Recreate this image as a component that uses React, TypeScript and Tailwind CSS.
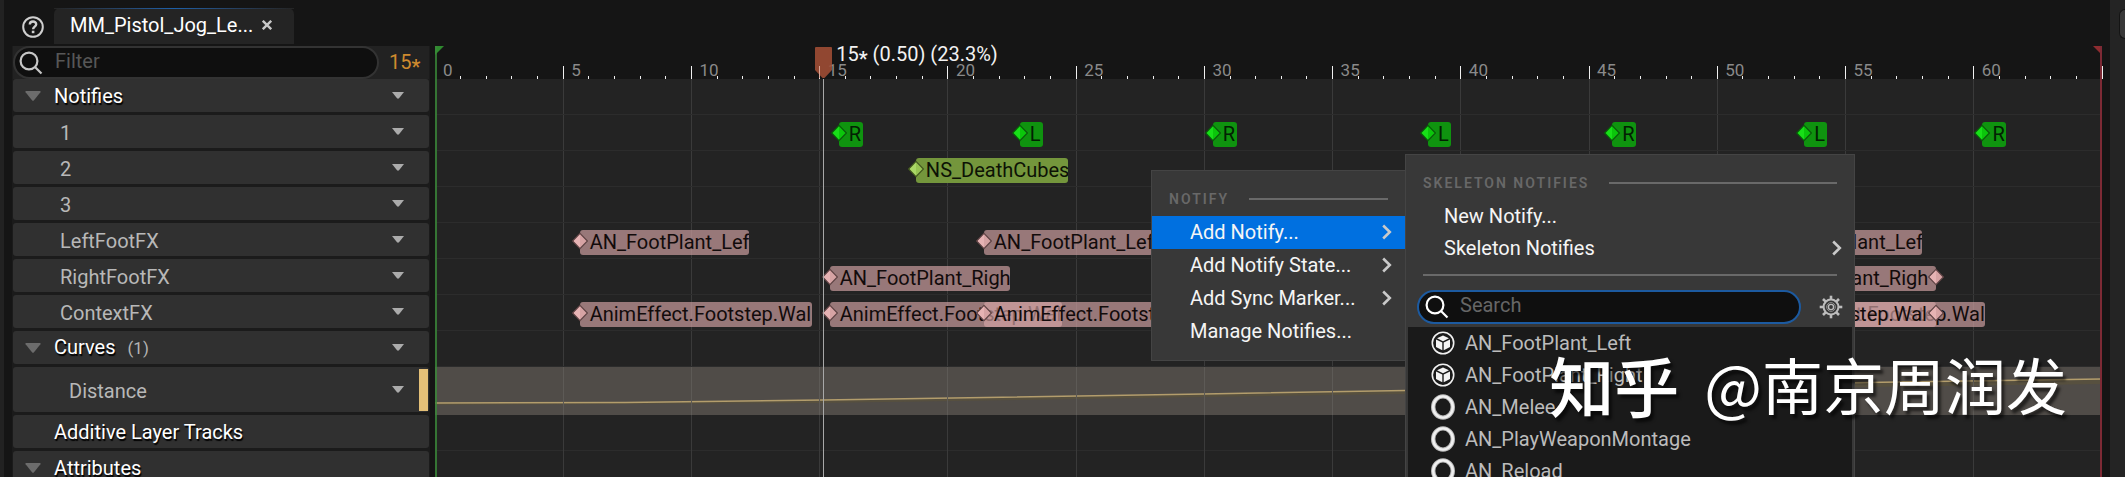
import React from 'react';

const LAST_FRAME = 65;
const FRAMES = Array.from({ length: LAST_FRAME + 1 }, (_, i) => i);
const MAJOR_FRAMES = FRAMES.filter((f) => f % 5 === 0 && f < LAST_FRAME);

const toPercent = (frame: number) => `${(frame / LAST_FRAME) * 100}%`;

type Tone = 'green' | 'lime' | 'pink';

interface Notify {
    frame: number;
    label: string;
    tone: Tone;
    width: string;
    flipped?: boolean;
}

interface OutlinerRow {
    label: string;
    kind: 'group' | 'track' | 'curve';
    count?: number;
    expander?: boolean;
    menu?: boolean;
}

const FOOT_LEFT = { label: 'AN_FootPlant_Lef', tone: 'pink' as Tone, width: 'w-[169px]' };
const FOOT_RIGHT = { label: 'AN_FootPlant_Righ', tone: 'pink' as Tone, width: 'w-[180px]' };
const FOOTSTEP = { label: 'AnimEffect.Footstep.Wal', tone: 'pink' as Tone, width: 'w-[232px]' };
const SYNC_R = { label: 'R', tone: 'green' as Tone, width: 'w-[24px]' };
const SYNC_L = { label: 'L', tone: 'green' as Tone, width: 'w-[23px]' };

const TRACKS: Notify[][] = [
    [],
    [
        { ...SYNC_R, frame: 15.74 },
        { ...SYNC_L, frame: 22.8 },
        { ...SYNC_R, frame: 30.33 },
        { ...SYNC_L, frame: 38.72 },
        { ...SYNC_R, frame: 45.9 },
        { ...SYNC_L, frame: 53.39 },
        { ...SYNC_R, frame: 60.34 },
    ],
    [{ frame: 18.75, label: 'NS_DeathCubes', tone: 'lime', width: 'w-[152px]' }],
    [],
    [
        { ...FOOT_LEFT, frame: 5.64 },
        { ...FOOT_LEFT, frame: 21.4 },
        { ...FOOT_LEFT, frame: 51.4 },
    ],
    [
        { ...FOOT_RIGHT, frame: 15.39 },
        { ...FOOT_RIGHT, frame: 58.54, flipped: true },
    ],
    [
        { ...FOOTSTEP, frame: 5.64 },
        { ...FOOTSTEP, frame: 15.39 },
        { ...FOOTSTEP, frame: 21.4 },
        { ...FOOTSTEP, frame: 51.4 },
        { ...FOOTSTEP, frame: 58.54, flipped: true },
    ],
    [],
];

const ROWS: OutlinerRow[] = [
    { label: 'Notifies', kind: 'group', expander: true, menu: true },
    { label: '1', kind: 'track', menu: true },
    { label: '2', kind: 'track', menu: true },
    { label: '3', kind: 'track', menu: true },
    { label: 'LeftFootFX', kind: 'track', menu: true },
    { label: 'RightFootFX', kind: 'track', menu: true },
    { label: 'ContextFX', kind: 'track', menu: true },
    { label: 'Curves', kind: 'group', count: 1, expander: true, menu: true },
    { label: 'Distance', kind: 'curve', menu: true },
    { label: 'Additive Layer Tracks', kind: 'group' },
    { label: 'Attributes', kind: 'group', expander: true },
];

const BOX_TONES: Record<Tone, string> = {
    green: 'bg-[#0f930f] text-[#032003]',
    lime: 'bg-[#74963c] text-[#0d1205]',
    pink: 'bg-[#d4a4a5]/66 text-[#120b0b]',
};

const DIAMOND_TONES: Record<Tone, [string, string, string]> = {
    green: ['#18df18', '#0bc60b', '#0a5a0a'],
    lime: ['#aad766', '#97c452', '#42561f'],
    pink: ['#e6b3b4', '#d6a3a4', '#5e4344'],
};

const SearchIcon: React.FC<{ className: string }> = ({ className }) => (
    <svg className={className} width="24" height="24" viewBox="0 0 24 24" fill="none" stroke="currentColor" strokeWidth="2.2">
        <circle cx="10" cy="10" r="8.4" />
        <path d="M16 16l6.5 6.5" />
    </svg>
);

const ChevronIcon: React.FC = () => (
    <svg className="shrink-0 text-[#c9c9c9]" width="10" height="16" viewBox="0 0 10 16" fill="none" stroke="currentColor" strokeWidth="2.6">
        <path d="M1.2 1.5L7.8 8l-6.6 6.5" />
    </svg>
);

const BlueprintIcon: React.FC = () => (
    <svg className="shrink-0" width="24" height="24" viewBox="0 0 24 24">
        <circle cx="12" cy="12" r="10.7" fill="none" stroke="#f0f0f0" strokeWidth="1.6" />
        <path d="M12 4.6l6 2.7-6 2.9-6-2.9z" fill="#f4f4f4" />
        <path d="M5 8.6l6.3 3v7.6L5 16z" fill="#f4f4f4" />
        <path d="M19 8.6l-6.3 3v7.6L19 16z" fill="#f4f4f4" />
    </svg>
);

const ClassIcon: React.FC = () => (
    <svg className="shrink-0" width="24" height="26" viewBox="0 0 24 26">
        <ellipse cx="12" cy="13" rx="9.8" ry="10.6" fill="none" stroke="#bdbdbd" strokeWidth="4.4" />
        <ellipse cx="12" cy="13" rx="9.8" ry="10.6" fill="none" stroke="#f0f0f0" strokeWidth="2.4" />
    </svg>
);

const GearIcon: React.FC = () => (
    <svg width="24" height="24" viewBox="-12 -12 24 24" fill="none" stroke="#bdbdbd">
        <circle r="7.4" strokeWidth="2" />
        <circle r="4.4" strokeWidth="1" stroke="#8c8c8c" />
        <circle r="2.6" strokeWidth="1.4" />
        {[0, 45, 90, 135, 180, 225, 270, 315].map((a) => (
            <path key={a} d="M0 -7.5V-11.3" strokeWidth="2.6" transform={`rotate(${a})`} />
        ))}
    </svg>
);

// frame number with the low "between frames" star
const FrameNumber: React.FC<{ frame: number }> = ({ frame }) => (
    <>
        {frame}
        <span className="align-sub leading-none font-medium">*</span>
    </>
);

const TabBar: React.FC = () => (
    <header className="flex h-[46px] items-end gap-[10px] pl-[10px]">
        <button type="button" aria-label="Help" className="mb-2 text-[#cfcfcf]">
            <svg width="22" height="22" viewBox="0 0 22 22" fill="none" stroke="currentColor">
                <circle cx="11" cy="11" r="9.8" strokeWidth="2" />
                <path d="M7.8 8.6c0-4 6.4-4 6.4-.3 0 2.400-3.100 2.400-3.100 5" strokeWidth="2.400" />
                <path d="M11.100 14.700v2.500" strokeWidth="2.600" />
            </svg>
        </button>
        <div className="mb-[2px] flex h-[36px] w-[240px] flex-col rounded-t-md bg-[#242424]">
            <div className="h-px bg-linear-to-r from-[#242424] via-[#1c5fa8] to-[#242424]" />
            <div className="flex flex-1 items-center gap-3 pb-[3px] pl-4">
                <span className="w-[180px] text-white">MM_Pistol_Jog_Le...</span>
                <button type="button" aria-label="Close tab" className="text-[#c8c8c8]">
                    <svg width="10" height="10" viewBox="0 0 10 10" stroke="currentColor" strokeWidth="2.4">
                        <path d="M.8 .8l8.400 8.400M9.200 .8L.8 9.200" />
                    </svg>
                </button>
            </div>
        </div>
    </header>
);

const Row: React.FC<{ row: OutlinerRow }> = ({ row }) => {
    const isGroup = row.kind === 'group';
    const isCurve = row.kind === 'curve';
    return (
        <li className={`flex shrink-0 items-center rounded-[3px] bg-[#303030] ${isCurve ? 'h-[45px]' : 'h-[33px]'}`}>
            <div className="flex w-[41px] shrink-0 pl-3">
                {row.expander && (
                    <button type="button" aria-label={`Collapse ${row.label}`}>
                        <svg width="16" height="10" viewBox="0 0 16 10" fill="#6c6c6c">
                            <path d="M1 0h14q1 .3 .4 1.200L9 9.200q-1 1-2 0L.6 1.200Q0 .3 1 0z" />
                        </svg>
                    </button>
                )}
            </div>
            {isGroup ? (
                <span className="flex flex-1 items-baseline gap-3 text-white [text-shadow:1px_2px_1px_#000]">
                    {row.label}
                    {row.count !== undefined && (
                        <span className="text-[17px] text-[#b4b4b4] [text-shadow:none]">({row.count})</span>
                    )}
                </span>
            ) : (
                <span className={`flex-1 pt-[2px] text-[#b8b8b8] ${isCurve ? 'pl-[15px]' : 'pl-[6px]'}`}>{row.label}</span>
            )}
            {row.menu && (
                <button type="button" aria-label={`${row.label} options`} className={isCurve ? 'mr-[15px]' : 'mr-[25px]'}>
                    <svg width="12" height="7" viewBox="0 0 12 7" fill="#ababab">
                        <path d="M0 0h12L7 6.300q-1 .9-2 0z" />
                    </svg>
                </button>
            )}
            {isCurve && <span className="mr-px h-[42px] w-[9px] bg-[#e4c078]" />}
        </li>
    );
};

const Outliner: React.FC = () => (
    <aside className="flex w-[418px] shrink-0 flex-col bg-[#1b1b1b] pr-px pl-px">
        <div className="flex h-[34px] items-center bg-[#222222]">
            <label className="flex h-[33px] w-[366px] items-center gap-[12px] rounded-full border-2 border-[#333333] bg-[#0f0f0f] pl-1">
                <SearchIcon className="shrink-0 text-[#c6c6c6]" />
                <input type="text" aria-label="Filter" placeholder="Filter" className="h-[26px] min-w-0 flex-1 self-start bg-transparent outline-none placeholder:text-[#575757]" />
            </label>
            <span className="pl-[10px] text-[#cf8a2e]">
                <FrameNumber frame={15} />
            </span>
        </div>
        <ul className="flex flex-col gap-[3px]">
            {ROWS.map((row) => (
                <Row key={row.label} row={row} />
            ))}
        </ul>
    </aside>
);

const NotifyMarker: React.FC<{ notify: Notify }> = ({ notify }) => {
    const [light, mid, edge] = DIAMOND_TONES[notify.tone];
    return (
        <div className="absolute top-[7px] h-[25px]" style={{ left: toPercent(notify.frame) }}>
            <div
                className={`h-[25px] overflow-hidden rounded-[3px] leading-6 whitespace-nowrap ${notify.width} ${BOX_TONES[notify.tone]} ${
                    notify.flipped ? '-translate-x-full pl-px' : 'pl-[10px]'
                }`}
            >
                {notify.label}
            </div>
            <svg className="absolute -top-px -left-2" width="16" height="24" viewBox="-8 -12 16 24">
                <path d="M0 -7.600L7.400 0 0 7.600 -7.400 0z" fill={mid} stroke={edge} strokeWidth="1.200" />
                <path d="M0 -6.400L0 6.400 -6.200 0z" fill={light} />
            </svg>
        </div>
    );
};

const Ruler: React.FC = () => (
    <div className="relative h-[33px]">
        {MAJOR_FRAMES.map((f) => (
            <span key={f} className="absolute top-[13px] pl-2 text-[17px] leading-[22px] text-[#8a8a8a]" style={{ left: toPercent(f) }}>
                {f}
            </span>
        ))}
        <svg className="absolute inset-0 h-full w-full overflow-visible">
            <path d="M0 0h9L0 9z" fill="#2f8a2f" />
            {FRAMES.slice(1).map((f) => (
                <line key={f} x1={toPercent(f)} x2={toPercent(f)} y1={f % 5 === 0 ? 20 : 30} y2="33" stroke="#f0f0f0" shapeRendering="crispEdges" />
            ))}
        </svg>
        <svg className="absolute top-0 right-0" width="9" height="9">
            <path d="M0 0h9v9z" fill="#8e2c30" />
        </svg>
    </div>
);

const CurveTrack: React.FC = () => (
    <div className="relative h-[48px] bg-[#504c48]">
        <svg className="block h-full w-full" viewBox="0 0 1666 48" preserveAspectRatio="none">
            <path d="M0 36.500L190 36 388 33.500 768 27.500 1430 15.500 1666 12V17L1430 20 768 30 388 36 0 38z" fill="#57503f" />
            <path d="M0 36L190 35.500 388 33 768 27 1430 15.500 1666 12" fill="none" stroke="#b39d6c" strokeWidth="1.500" />
        </svg>
    </div>
);

const Timeline: React.FC = () => (
    <main className="relative ml-[5px] flex min-w-0 flex-1 flex-col">
        <Ruler />
        <div className="relative flex-1 bg-[#232323]">
            <svg className="absolute inset-0 h-full w-full">
                {MAJOR_FRAMES.slice(1).map((f) => (
                    <line key={f} x1={toPercent(f)} x2={toPercent(f)} y1="0" y2="100%" stroke="#3a3a3a" shapeRendering="crispEdges" />
                ))}
            </svg>
            {TRACKS.map((track, i) => (
                <div key={i} className="relative h-[36px] border-b border-[#2c2c2c]">
                    {track.map((notify, j) => (
                        <NotifyMarker key={j} notify={notify} />
                    ))}
                </div>
            ))}
            <CurveTrack />
            <div className="h-[36px] border-b border-[#2c2c2c]" />
            <svg className="pointer-events-none absolute inset-0 h-full w-full">
                {MAJOR_FRAMES.slice(1).map((f) => (
                    <line key={f} x1={toPercent(f)} x2={toPercent(f)} y1="288" y2="336" stroke="#5d5a56" shapeRendering="crispEdges" />
                ))}
            </svg>
        </div>
        <div className="absolute inset-y-0 left-0 w-[2px] bg-[#3a8a38]/80" />
        <div className="absolute inset-y-0 right-0 w-[2px] bg-[#7d2a35]" />
        {/* playhead */}
        <div className="absolute inset-y-0" style={{ left: toPercent(15.14) }}>
            <div className="mt-[33px] h-full w-px bg-[#a8a8a8]" />
            <svg className="absolute top-px -left-2" width="17" height="31" viewBox="0 0 17 31">
                <path d="M1 0h15q1 0 1 1v22l-7 7.500q-1.500 1-3 0L0 23V1q0-1 1-1z" fill="#a34e36" fillOpacity=".88" />
                <path d="M4.500 19v12" stroke="#d9a596" />
            </svg>
            <span className="absolute -top-1 left-[13px] leading-6 whitespace-nowrap text-[#f2f2f2]">
                <FrameNumber frame={15} /> (0.50) (23.3%)
            </span>
        </div>
    </main>
);

const MenuHeading: React.FC<{ children: React.ReactNode }> = ({ children }) => (
    <div className="flex items-center gap-[20px] px-[17px]">
        <h2 className="text-[14px] leading-5 font-semibold tracking-[2px] text-[#686868] uppercase">{children}</h2>
        <span className="h-[2px] flex-1 bg-[#696969]" />
    </div>
);

const NotifyMenu: React.FC = () => (
    <div role="menu" className="absolute top-[170px] left-[1151px] w-[255px] border border-[#444444] bg-[#383838] pt-[18px] pb-3">
        <MenuHeading>Notify</MenuHeading>
        <div className="flex flex-col pt-[7px]">
            {['Add Notify...', 'Add Notify State...', 'Add Sync Marker...', 'Manage Notifies...'].map((item, i) => (
                <button
                    key={item}
                    type="button"
                    role="menuitem"
                    className={`flex h-[33px] items-center justify-between pr-[13px] pb-[2px] pl-[38px] text-left text-[#f5f5f5] ${i === 0 ? 'bg-[#0070e0]' : ''}`}
                >
                    {item}
                    {i < 3 && <ChevronIcon />}
                </button>
            ))}
        </div>
    </div>
);

const CLASSES = [
    { name: 'AN_FootPlant_Left', blueprint: true },
    { name: 'AN_FootPlant_Right', blueprint: true },
    { name: 'AN_Melee', blueprint: false },
    { name: 'AN_PlayWeaponMontage', blueprint: false },
    { name: 'AN_Reload', blueprint: false },
];

const AddNotifyMenu: React.FC = () => (
    <div role="menu" className="absolute top-[154px] left-[1405px] w-[450px] border border-[#444444] bg-[#383838] pt-[18px]">
        <MenuHeading>Skeleton Notifies</MenuHeading>
        <div className="flex flex-col pt-[7px]">
            <button type="button" role="menuitem" className="flex h-[32px] items-center pl-[38px] text-[#f5f5f5]">
                New Notify...
            </button>
            <button type="button" role="menuitem" className="flex h-[32px] items-center justify-between pr-[12px] pl-[38px] text-[#f5f5f5]">
                Skeleton Notifies
                <ChevronIcon />
            </button>
        </div>
        <hr className="mx-[17px] mt-[10px] border-t-2 border-[#696969]" />
        <div className="mt-[14px] flex items-center gap-[18px] pr-[11px] pl-[11px]">
            <label className="flex h-[34px] flex-1 items-center gap-[11px] rounded-full border-2 border-[#1c5aa0] bg-[#0f0f0f] pl-[6px]">
                <SearchIcon className="shrink-0 text-white" />
                <input type="text" aria-label="Search classes" placeholder="Search" className="h-[26px] min-w-0 flex-1 self-start bg-transparent outline-none placeholder:text-[#666666]" />
            </label>
            <button type="button" aria-label="View settings">
                <GearIcon />
            </button>
        </div>
        <ul className="mx-[2px] mt-[3px] bg-[#1a1a1a]">
            {CLASSES.map((cls) => (
                <li key={cls.name} className="flex h-[32px] items-center gap-[10px] pl-[23px] text-[#bcbcbc]">
                    {cls.blueprint ? <BlueprintIcon /> : <ClassIcon />}
                    {cls.name}
                </li>
            ))}
        </ul>
    </div>
);

const Watermark: React.FC = () => (
    <div className="pointer-events-none absolute right-[58px] bottom-[49px] flex items-center gap-[25px] font-['Noto_Sans_CJK_SC',sans-serif] leading-[88px] whitespace-nowrap text-white [text-shadow:3px_4px_3px_rgba(0,0,0,0.6)]">
        <span className="text-[65px] font-medium">知乎</span>
        <span className="text-[61px]">@南京周润发</span>
    </div>
);

const App: React.FC = () => {
    return (
        <div className="relative flex h-screen overflow-hidden bg-[#151515] font-[Roboto,sans-serif] text-[20px] leading-[26px]">
            <div className="w-1 shrink-0 bg-[#222222]" />
            <div className="flex min-w-0 flex-1 flex-col pr-2 pl-2">
                <TabBar />
                <div className="flex min-h-0 flex-1">
                    <Outliner />
                    <Timeline />
                </div>
            </div>
            <div className="flex w-[15px] shrink-0 flex-col items-end bg-[#242424] pt-[9px]">
                <div className="h-[30px] w-[6px] rounded-l-md border border-r-0 border-[#141414] bg-[#383838]" />
            </div>
            <NotifyMenu />
            <AddNotifyMenu />
            <Watermark />
        </div>
    );
};

export default App;
